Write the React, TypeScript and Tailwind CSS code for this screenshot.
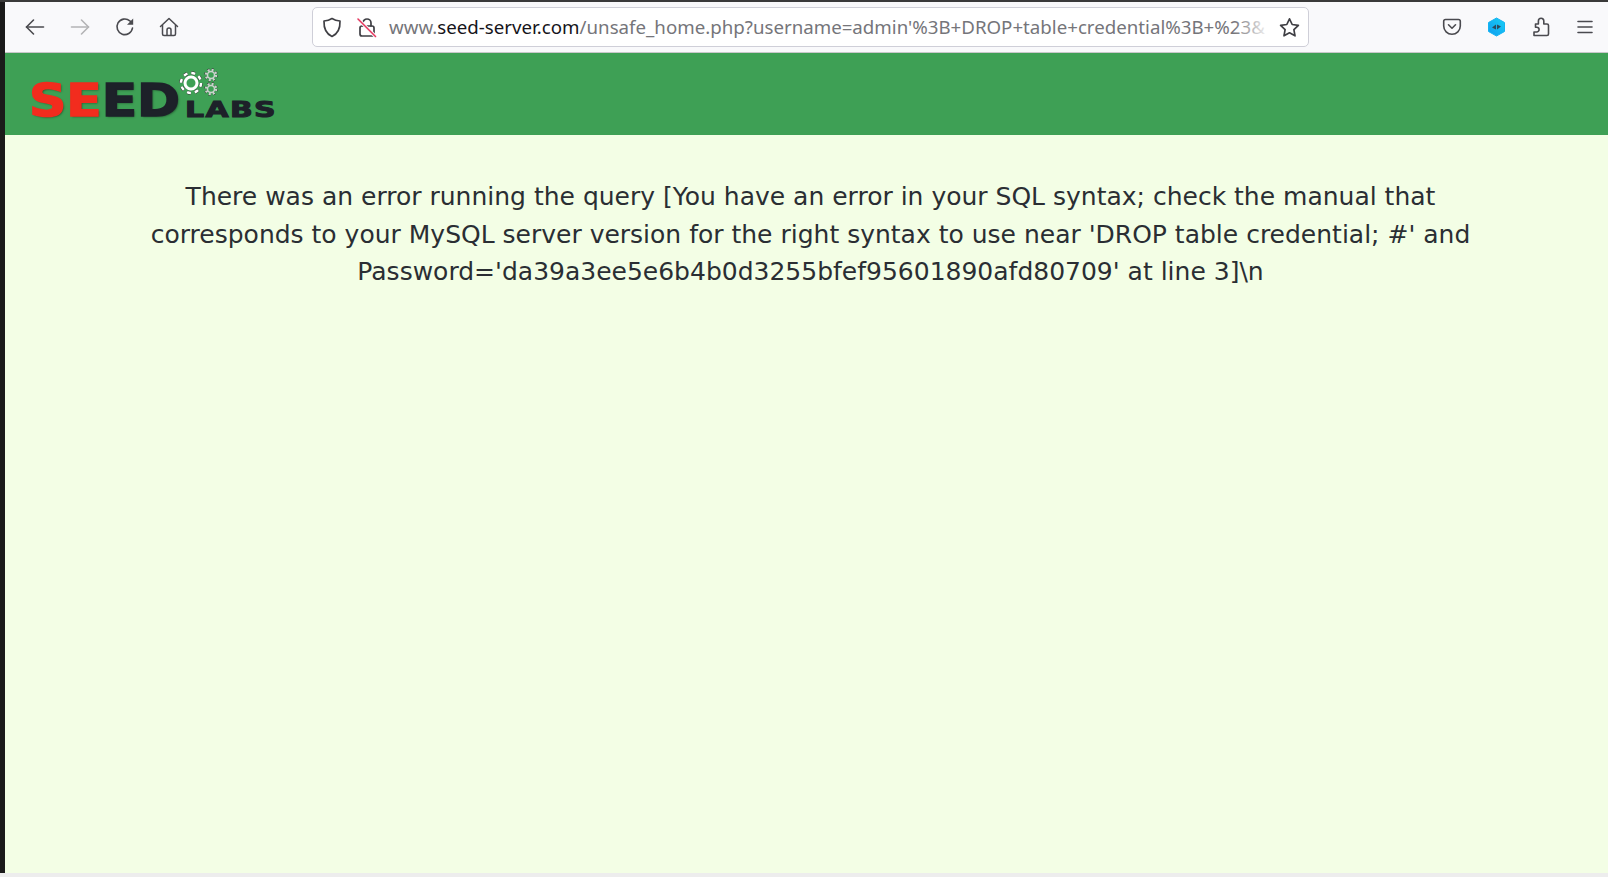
function BackIcon({ dim }: { dim?: boolean }) {
  const flip = dim ? "scale(-1 1) translate(-20 0)" : undefined;
  return (
    <svg width="20" height="20" viewBox="0 0 20 20" fill="none" stroke={dim ? "#b4b4b6" : "#4a4a4f"} strokeWidth="1.6" strokeLinecap="round" strokeLinejoin="round">
      <g transform={flip}>
        <path d="M1.500 10h17" />
        <path d="M8.500 3 1.500 10l7 7" />
      </g>
    </svg>
  );
}

function ReloadIcon() {
  return (
    <svg width="20" height="20" viewBox="0 0 20 20" fill="none" stroke="#4a4a4f" strokeWidth="1.6" strokeLinecap="round">
      <path d="M17.500 11A7.800 7.800 0 1 1 14.800 3.800L17 6" />
      <path d="M18.200 1.500v6.300H12z" fill="#4a4a4f" stroke="none" />
    </svg>
  );
}

function HomeIcon() {
  return (
    <svg width="20" height="20" viewBox="0 0 20 20" fill="none" stroke="#4a4a4f" strokeWidth="1.5" strokeLinejoin="round">
      <path d="M1.500 9.500 10 1.500l8.500 8" strokeLinecap="round" />
      <path d="M3.500 8v9a1.500 1.500 0 0 0 1.500 1.500h10a1.500 1.500 0 0 0 1.500-1.500V8" />
      <path d="M8 18.500V13a2 2 0 0 1 4 0v5.500" />
    </svg>
  );
}

function ShieldIcon() {
  return (
    <svg width="20" height="21" viewBox="0 0 20 21" fill="none" stroke="#3f3f44" strokeWidth="1.7" strokeLinejoin="round">
      <path d="M10 1.500c2.300 1.500 4.900 2.300 8 2.500.3 7.500-2.200 12.800-8 15.500C4.200 16.800 1.700 11.500 2 4c3.100-.2 5.700-1 8-2.500z" />
    </svg>
  );
}

function LockOffIcon() {
  return (
    <svg width="20" height="21" viewBox="0 0 20 21" fill="none" strokeLinecap="round">
      <path d="M6 9V6a4 4 0 0 1 8 0v3" stroke="#3f3f44" strokeWidth="1.7" />
      <rect x="3" y="9" width="14" height="10" rx="2" stroke="#3f3f44" strokeWidth="1.7" />
      <path d="M1.500 2.500 18.500 19.500" stroke="#f9f9fb" strokeWidth="3.500" />
      <path d="M1 2 18.500 19.500" stroke="#e8365d" strokeWidth="1.500" />
    </svg>
  );
}

function StarIcon() {
  return (
    <svg width="21" height="21" viewBox="0 0 21 21" fill="none" stroke="#3f3f44" strokeWidth="1.700" strokeLinejoin="round">
      <path d="m10.500 1.800 2.700 5.700 6.200.8-4.500 4.300 1.100 6.200-5.500-3-5.500 3 1.100-6.200-4.500-4.300 6.200-.8z" />
    </svg>
  );
}

function PocketIcon() {
  return (
    <svg width="20" height="20" viewBox="0 0 20 20" fill="none" stroke="#4a4a4f" strokeWidth="1.600" strokeLinecap="round" strokeLinejoin="round">
      <path d="M3.500 2.500h13a1.800 1.800 0 0 1 1.800 1.800V9a8.300 8.300 0 0 1-16.600 0V4.300a1.800 1.800 0 0 1 1.800-1.800z" />
      <path d="m6.500 7.800 3.500 3.400 3.500-3.400" />
    </svg>
  );
}

function HexIcon() {
  return (
    <svg width="19" height="20" viewBox="0 0 19 20">
      <defs>
        <linearGradient id="hexFill" x1="1" y1="0" x2="0" y2="1">
          <stop offset="0" stopColor="#18d0f5" />
          <stop offset="1" stopColor="#0f9cf0" />
        </linearGradient>
      </defs>
      <path d="M9.500 1 17.500 5.500v9L9.500 19l-8-4.500v-9z" fill="url(#hexFill)" stroke="#14b4f2" strokeLinejoin="round" />
      <path d="M5 10.500 9 7.500v5z" fill="#2b4a5e" />
      <path d="M14 9.500 10 12.500v-5z" fill="#2b4a5e" />
    </svg>
  );
}

function PuzzleIcon() {
  return (
    <svg width="20" height="20" viewBox="0 0 20 20" fill="none" stroke="#4a4a4f" strokeWidth="1.600" strokeLinejoin="round">
      <path d="M3 18.500h13a1.500 1.500 0 0 0 1.500-1.500V8.500A1.500 1.500 0 0 0 16 7h-3.200V4a2.700 2.700 0 0 0-5.400 0v3H4.500v3.200h1.200a2.400 2.400 0 0 1 0 4.800H3z" />
    </svg>
  );
}

function MenuIcon() {
  return (
    <svg width="20" height="20" viewBox="0 0 20 20" fill="none" stroke="#4a4a4f" strokeWidth="1.600" strokeLinecap="round">
      <path d="M3 4.500h14M3 10h14M3 15.500h14" />
    </svg>
  );
}

function Gear({ r, color, hole }: { r: number; color: string; hole: number }) {
  // teeth come from a dashed ring
  const c = r + 2;
  const tr = r - 1;
  const dash = (2 * Math.PI * tr) / 16;
  return (
    <svg width={c * 2} height={c * 2} viewBox={`0 0 ${c * 2} ${c * 2}`} fill="none">
      <circle cx={c} cy={c} r={tr} stroke="#333" strokeWidth={3.5} strokeDasharray={`${dash} ${dash}`} />
      <circle cx={c} cy={c} r={tr} stroke={color} strokeWidth={2.5} strokeDasharray={`${dash} ${dash}`} />
      <circle cx={c} cy={c} r={hole + 1} stroke={color} strokeWidth={r > 8 ? 3 : 1.5} />
    </svg>
  );
}

function Logo() {
  return (
    <div className="relative w-[250px] h-[50px] mt-[18px] ml-[25px] font-['DejaVu_Sans',sans-serif] font-bold">
      <div className="absolute left-[-1px] top-[5px] text-[45px] leading-[50px] origin-left scale-x-[1.15] [-webkit-text-stroke:1.500px_currentColor] whitespace-nowrap [text-shadow:1px_1px_2px_rgba(0,0,0,0.45)]">
        <span className="text-[#f22c1e]">SE</span>
        <span className="text-[#1d2129]">ED</span>
      </div>
      <div className="absolute left-[155px] top-[25px] text-[22px] leading-[28px] tracking-[1px] origin-left scale-x-[1.36] text-[#1d2129] [-webkit-text-stroke:1px_currentColor] whitespace-nowrap">
        LABS
      </div>
      <div className="absolute left-[148px] top-[-1px]">
        <Gear r={11} color="#ffffff" hole={5} />
      </div>
      <div className="absolute left-[173px] top-[-4px]">
        <Gear r={6} color="#c9d4cc" hole={2.5} />
      </div>
      <div className="absolute left-[173px] top-[10px]">
        <Gear r={6} color="#c9d4cc" hole={2.5} />
      </div>
    </div>
  );
}

export default function App() {
  return (
    <div className="h-[877px] w-[1608px] overflow-hidden flex flex-col bg-[#ededed]">
      <div className="h-[2px] bg-[#3a3a3a]" />
      <div className="flex flex-1 min-h-0">
        <div className="w-[5px] bg-[#1a1a1a]" />
        <div className="flex-1 flex flex-col min-w-0">
          {/* Toolbar */}
          <div className="h-[51px] flex items-center bg-[#f9f9fb] border-b border-[#c8c8ca] pl-2 pr-[1px]">
            <div className="w-[44px] flex justify-center"><BackIcon /></div>
            <div className="w-[45px] flex justify-center"><BackIcon dim /></div>
            <div className="w-[46px] flex justify-center"><ReloadIcon /></div>
            <div className="w-[42px] flex justify-center"><HomeIcon /></div>
            <div className="ml-[122px] w-[997px] h-[40px] flex items-center bg-white border border-[#cfcfd8] rounded-[5px] pl-[9px] font-['Noto_Sans',sans-serif]">
              <ShieldIcon />
              <div className="ml-[15px]"><LockOffIcon /></div>
              <div className="relative ml-[12px] flex-1 min-w-0 whitespace-nowrap text-[18.700px] text-[#75757a]">
                www.<span className="text-[#15141a]">seed-server.com</span>/unsafe_home.php?username=admin'%3B+DROP+table+credential%3B+%23&amp;
                <div className="absolute right-0 top-0 bottom-0 w-[36px] bg-gradient-to-r from-transparent to-white" />
              </div>
              <div className="w-[38px] flex justify-center"><StarIcon /></div>
            </div>
            <div className="flex-1" />
            <div className="w-[44px] flex justify-center"><PocketIcon /></div>
            <div className="w-[45px] flex justify-center"><HexIcon /></div>
            <div className="w-[44px] flex justify-center"><PuzzleIcon /></div>
            <div className="w-[44px] flex justify-center"><MenuIcon /></div>
          </div>

          {/* Green header */}
          <div className="h-[82px] bg-[#3ea055] shrink-0">
            <Logo />
          </div>

          {/* Error message */}
          <div className="flex-1 bg-[#f3fee5] pt-[43px] pl-[138px] pr-[130px] font-['DejaVu_Sans',sans-serif] text-[25px] leading-[37.500px] text-center text-[#2a2e33]">
            There was an error running the query [You have an error in your SQL syntax; check the manual that corresponds to your MySQL server version for the right syntax to use near 'DROP table credential; #' and Password='da39a3ee5e6b4b0d3255bfef95601890afd80709' at line 3]\n
          </div>
        </div>
      </div>
      <div className="h-[4px] shrink-0" />
    </div>
  );
}
